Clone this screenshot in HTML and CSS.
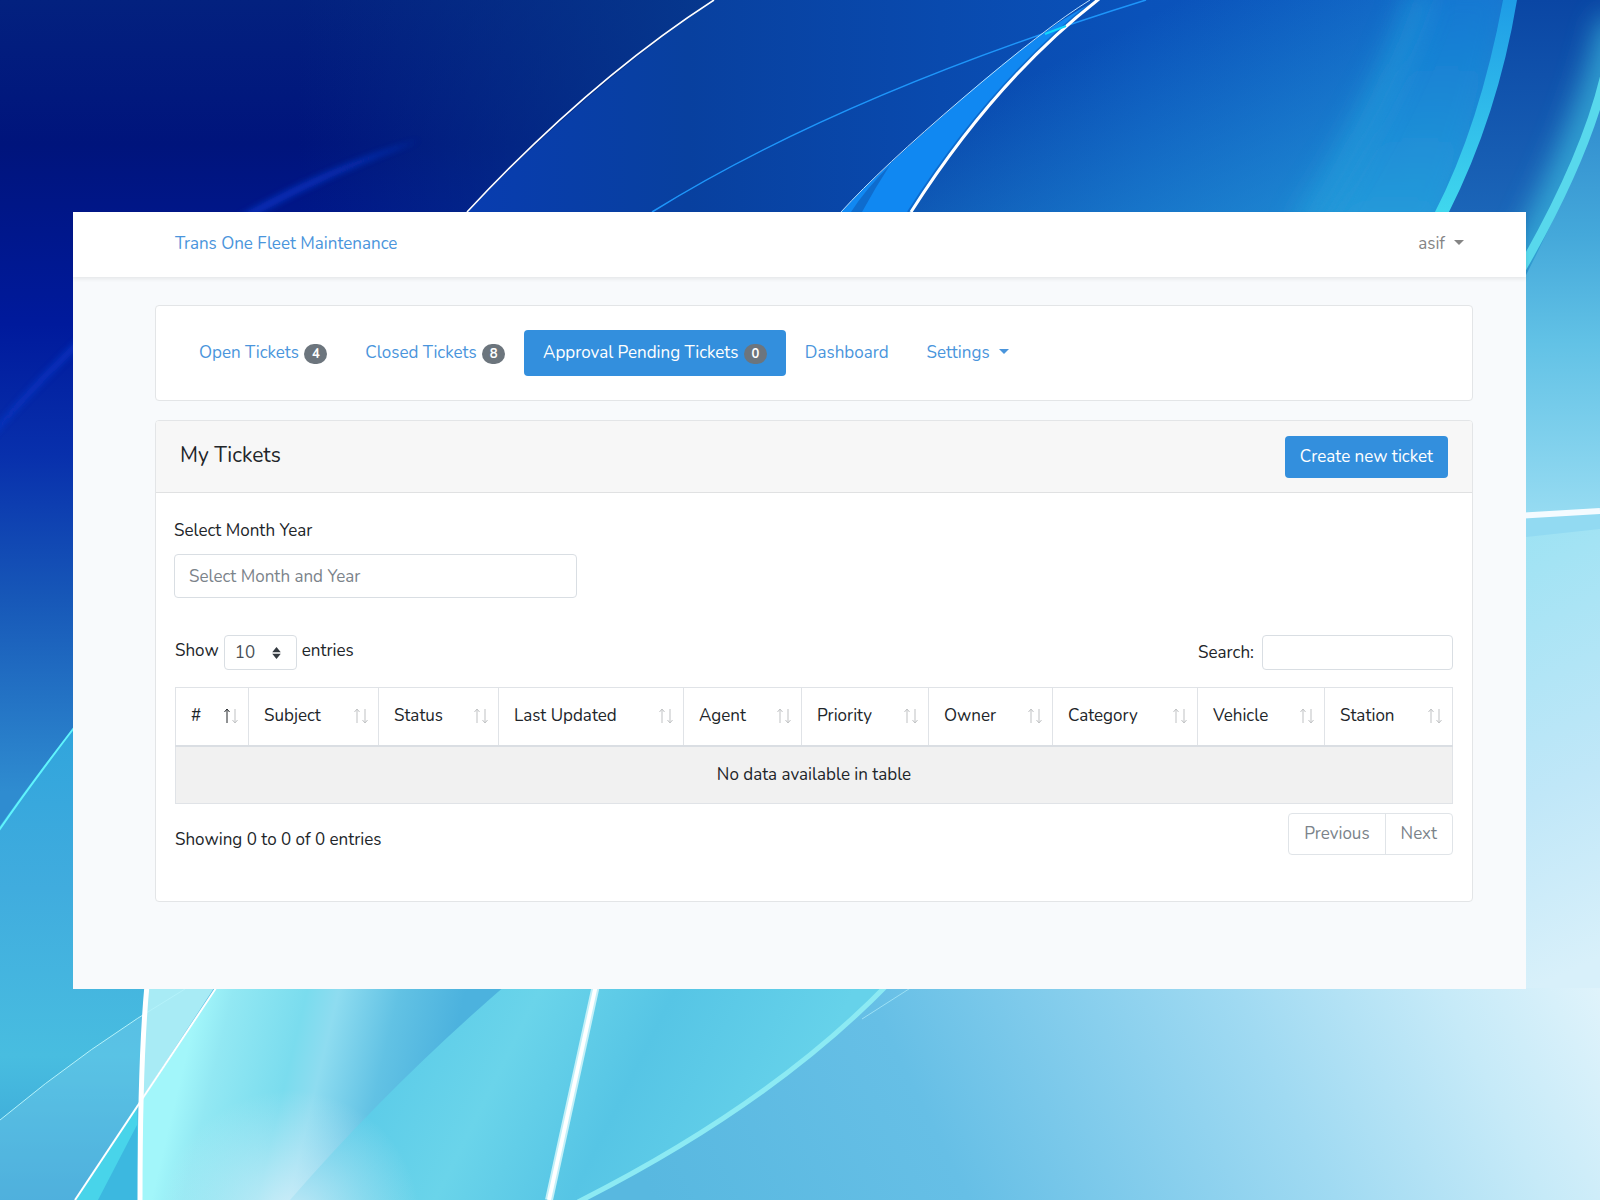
FILE: index.html
```
<!DOCTYPE html>
<html lang="en">
<head>
    <meta charset="UTF-8">
    <meta name="viewport" content="width=device-width, initial-scale=1.0">
    <title>Trans One Fleet Maintenance</title>
    <link rel="stylesheet" href="styles.css">
</head>
<body>
    <!-- wallpaper -->
    <svg class="wallpaper" viewBox="0 0 1600 1200" preserveAspectRatio="xMidYMid slice" aria-hidden="true">
        <defs>
            <linearGradient id="base" x1="0" y1="0" x2="0" y2="1">
                <stop offset="0" stop-color="#03217f"/>
                <stop offset=".12" stop-color="#00147c"/>
                <stop offset=".27" stop-color="#001a9c"/>
                <stop offset=".38" stop-color="#0830ac"/>
                <stop offset=".5" stop-color="#1758b8"/>
                <stop offset=".66" stop-color="#2f8cd0"/>
            </linearGradient>
            <linearGradient id="teal" x1="0" y1="0" x2="1" y2="0">
                <stop offset=".1" stop-color="#06358a" stop-opacity="0"/>
                <stop offset="1" stop-color="#06398f"/>
            </linearGradient>
            <linearGradient id="mid" x1="0" y1="0" x2="1" y2="0">
                <stop offset="0" stop-color="#083cb0"/>
                <stop offset=".2" stop-color="#08409f"/>
                <stop offset=".6" stop-color="#0a52ba"/>
                <stop offset="1" stop-color="#0c5cc4"/>
            </linearGradient>
            <linearGradient id="midGlow" gradientUnits="userSpaceOnUse" x1="1060" y1="60" x2="1180" y2="300">
                <stop offset="0" stop-color="#28a0dc" stop-opacity="0"/>
                <stop offset="1" stop-color="#28a0dc" stop-opacity=".7"/>
            </linearGradient>
            <linearGradient id="ray" x1="0" y1="0" x2="0" y2="1">
                <stop offset="0" stop-color="#1278d4"/>
                <stop offset="1" stop-color="#28a2dc"/>
            </linearGradient>
            <linearGradient id="band" x1="0" y1="0" x2="0" y2="1">
                <stop offset="0" stop-color="#0a46a4"/>
                <stop offset="1" stop-color="#2272c0"/>
            </linearGradient>
            <linearGradient id="stripe" x1="0" y1="0" x2="0" y2="1">
                <stop offset="0" stop-color="#1e9ce6"/>
                <stop offset="1" stop-color="#40d8ee"/>
            </linearGradient>
            <linearGradient id="right" x1="0" y1="0" x2="0" y2="1">
                <stop offset="0" stop-color="#2c86cc"/>
                <stop offset=".35" stop-color="#44a8da"/>
                <stop offset=".6" stop-color="#62c2e6"/>
                <stop offset="1" stop-color="#98dcf2"/>
            </linearGradient>
            <linearGradient id="rightLow" x1="0" y1="0" x2=".1" y2="1">
                <stop offset="0" stop-color="#9ce2f3"/>
                <stop offset=".6" stop-color="#c0e7f8"/>
                <stop offset="1" stop-color="#d8f0fa"/>
            </linearGradient>
            <linearGradient id="sky" x1="0" y1=".1" x2="1" y2="0">
                <stop offset="0" stop-color="#58b8e0"/>
                <stop offset=".3" stop-color="#66bfe6"/>
                <stop offset=".65" stop-color="#a0daf2"/>
                <stop offset=".85" stop-color="#c6eaf8"/>
                <stop offset="1" stop-color="#dff3fb"/>
            </linearGradient>
            <linearGradient id="leftLow" x1="0" y1="0" x2="0" y2="1">
                <stop offset="0" stop-color="#30a4dc"/>
                <stop offset=".35" stop-color="#40acde"/>
                <stop offset=".7" stop-color="#48bde0"/>
                <stop offset="1" stop-color="#38a0d4"/>
            </linearGradient>
            <linearGradient id="leaf" gradientUnits="userSpaceOnUse" x1="180" y1="1080" x2="430" y2="1140">
                <stop offset="0" stop-color="#a2f6fa"/>
                <stop offset=".12" stop-color="#92e8f3"/>
                <stop offset=".4" stop-color="#7adcee"/>
                <stop offset=".52" stop-color="#8edcf0"/>
                <stop offset=".75" stop-color="#62c2e4"/>
                <stop offset="1" stop-color="#4cb2de"/>
            </linearGradient>
            <linearGradient id="aqua" gradientUnits="userSpaceOnUse" x1="400" y1="1000" x2="760" y2="1180">
                <stop offset="0" stop-color="#5acbe8"/>
                <stop offset=".3" stop-color="#6ad4ea"/>
                <stop offset=".6" stop-color="#56c5e5"/>
                <stop offset="1" stop-color="#66d2ea"/>
            </linearGradient>
            <radialGradient id="mist" gradientUnits="userSpaceOnUse" cx="290" cy="1220" r="130">
                <stop offset="0" stop-color="#e0f2fb" stop-opacity=".8"/>
                <stop offset=".6" stop-color="#e0f2fb" stop-opacity=".3"/>
                <stop offset="1" stop-color="#e0f2fb" stop-opacity="0"/>
            </radialGradient>
            <filter id="soft" x="-50%" y="-50%" width="200%" height="200%">
                <feGaussianBlur stdDeviation="14"/>
            </filter>
            <filter id="glow" x="-50%" y="-50%" width="200%" height="200%">
                <feGaussianBlur stdDeviation="3"/>
            </filter>
        </defs>

        <rect width="1600" height="1200" fill="url(#base)"/>
        <rect x="250" width="480" height="300" fill="url(#teal)"/>
        <path d="M-10 434Q110 290 250 210Q330 165 420 140Q335 172 254 216Q120 290 -10 440Z" fill="#0a3ad0" opacity=".7" filter="url(#glow)"/>

        <!-- upper sheets -->
        <path d="M714 0Q590 85 467 212L460 400H1600V0Z" fill="url(#mid)"/>
        <path d="M1098 0Q985 90 900 230H1600V0Z" fill="url(#midGlow)"/>
        <path d="M1430 -20Q1395 90 1310 240H1440Q1490 120 1516 -20Z" fill="url(#ray)" opacity=".8" filter="url(#soft)"/>
        <path d="M1421 -10Q1390 90 1300 230" fill="none" stroke="#2cb4e4" stroke-width="18" opacity=".5" filter="url(#soft)"/>
        <path d="M1510 0Q1494 110 1442 220V300H1600V0Z" fill="url(#band)"/>
        <path d="M1620 20Q1600 120 1520 280" fill="none" stroke="#3cc0e0" stroke-width="40" opacity=".7" filter="url(#soft)"/>
        <path d="M1503 0Q1480 125 1434 214H1448Q1498 115 1517 0Z" fill="url(#stripe)"/>
        <path d="M1606 80Q1585 160 1526 275V520H1606Z" fill="url(#right)"/>
        <path d="M1605 75Q1585 160 1518 275" fill="none" stroke="#58d8ec" stroke-width="9"/>

        <path d="M714 0Q590 80 467 212" fill="none" stroke="#fff" stroke-width="1.600"/>
        <path d="M652 212Q840 95 1146 0" fill="none" stroke="#1e96fa" stroke-width="1.500"/>
        <path d="M1098 0Q1050 22 963 98T841 212H911Q985 90 1098 0Z" fill="#1088f2"/>
        <path d="M890 165Q865 190 851 212H862Q875 188 890 165Z" fill="#0e6cce"/>
        <path d="M1090 0Q1045 28 963 98T841 212" fill="none" stroke="#b8e0ff" stroke-width="1"/>
        <path d="M1096 -1Q992 80 908 212" fill="none" stroke="#0c56b4" stroke-width="2" opacity=".6"/>
        <path d="M1099 -1Q995 80 911 212" fill="none" stroke="#fff" stroke-width="3"/>
        <path d="M1045 34L1066 26" stroke="#10d8fc" stroke-width="2"/>

        <!-- right side -->
        <path d="M1500 518L1600 509V620H1500Z" fill="#92daf2"/>
        <path d="M1500 540L1600 529V1000H1500Z" fill="url(#rightLow)"/>
        <path d="M1500 517L1600 511" stroke="#f4fbff" stroke-width="6"/>
        <rect x="560" y="988" width="1040" height="212" fill="url(#sky)"/>

        <!-- lower left -->
        <path d="M-10 840Q30 782 80 720H300V1200H-10Z" fill="url(#leftLow)"/>
        <path d="M-5 836Q30 785 80 720" fill="none" stroke="#60f4fc" stroke-width="2"/>
        <path d="M0 1120Q90 1045 185 989L140 1200H0Z" fill="#7ccfee" opacity=".35"/>
        <path d="M137 1105L75 1200H140Z" fill="#48d4ea"/>
        <path d="M137 1125L98 1200H140Z" fill="#3cb8e0"/>
        <path d="M147 985L141 1100L216 985Z" fill="#a8ebf5"/>
        <path d="M218 985L141 1102V1200H300L520 985Z" fill="url(#leaf)"/>
        <path d="M506 985Q390 1085 290 1200H578Q770 1110 885 985Z" fill="url(#aqua)"/>
        <rect x="140" y="1080" width="330" height="120" fill="url(#mist)"/>
        <path d="M0 1120Q90 1045 185 989" fill="none" stroke="#b4f2fa" stroke-width="1"/>
        <path d="M218 985L75 1200" stroke="#fff" stroke-width="2"/>
        <path d="M147 985Q140 1060 140 1200" fill="none" stroke="#fff" stroke-width="5"/>
        <path d="M596 985L549 1200" stroke="#c4f0f8" stroke-width="8"/>
        <path d="M596 985L549 1200" stroke="#fff" stroke-width="4"/>
        <path d="M887 985Q770 1105 578 1202" fill="none" stroke="#8ceaf3" stroke-width="5"/>
        <path d="M912 987L862 1019" stroke="#9ce0f4" stroke-width="1"/>
    </svg>

    <!-- icons -->
    <svg class="sprite" aria-hidden="true">
        <symbol id="sort" viewBox="0 0 16 18">
            <path class="up" d="M4 16V3M1.500 5L4 2L6.500 5"/>
            <path class="down" d="M12 2V15M9.500 13L12 16L14.500 13"/>
        </symbol>
        <symbol id="updown" viewBox="0 0 10 14">
            <path d="M0 6L5 0L10 6ZM0 8L5 14L10 8Z"/>
        </symbol>
    </svg>

    <div class="app">
        <header class="navbar">
            <a class="brand" href="#">Trans One Fleet Maintenance</a>
            <button class="user-menu caret" type="button">asif</button>
        </header>

        <main class="content">
            <nav class="card tabs">
                <a class="tab" href="#">Open Tickets <span class="badge">4</span></a>
                <a class="tab" href="#">Closed Tickets <span class="badge">8</span></a>
                <a class="tab active" href="#">Approval Pending Tickets <span class="badge">0</span></a>
                <a class="tab" href="#">Dashboard</a>
                <a class="tab caret" href="#">Settings</a>
            </nav>

            <section class="card">
                <div class="card-header">
                    <h1>My Tickets</h1>
                    <button class="btn-primary" type="button">Create new ticket</button>
                </div>
                <div class="card-body">
                    <div class="month-filter">
                        <label for="month">Select Month Year</label>
                        <input class="field" id="month" type="text" placeholder="Select Month and Year">
                    </div>

                    <div class="table-tools">
                        <div class="length">
                            <label for="length">Show</label>
                            <span class="select-wrap">
                                <select class="field small" id="length">
                                    <option>10</option>
                                    <option>25</option>
                                    <option>50</option>
                                    <option>100</option>
                                </select>
                                <svg class="select-arrow"><use href="#updown"/></svg>
                            </span>
                            <span>entries</span>
                        </div>
                        <div class="search">
                            <label for="search">Search:</label>
                            <input class="field small" id="search" type="search">
                        </div>
                    </div>

                    <table class="tickets">
                        <thead>
                            <tr>
                                <th class="c-id sorted"><div>#<svg class="sort"><use href="#sort"/></svg></div></th>
                                <th class="c-subject"><div>Subject<svg class="sort"><use href="#sort"/></svg></div></th>
                                <th class="c-status"><div>Status<svg class="sort"><use href="#sort"/></svg></div></th>
                                <th class="c-updated"><div>Last Updated<svg class="sort"><use href="#sort"/></svg></div></th>
                                <th class="c-agent"><div>Agent<svg class="sort"><use href="#sort"/></svg></div></th>
                                <th class="c-priority"><div>Priority<svg class="sort"><use href="#sort"/></svg></div></th>
                                <th class="c-owner"><div>Owner<svg class="sort"><use href="#sort"/></svg></div></th>
                                <th class="c-category"><div>Category<svg class="sort"><use href="#sort"/></svg></div></th>
                                <th class="c-vehicle"><div>Vehicle<svg class="sort"><use href="#sort"/></svg></div></th>
                                <th class="c-station"><div>Station<svg class="sort"><use href="#sort"/></svg></div></th>
                            </tr>
                        </thead>
                        <tbody>
                            <tr>
                                <td colspan="10">No data available in table</td>
                            </tr>
                        </tbody>
                    </table>

                    <div class="table-footer">
                        <p>Showing 0 to 0 of 0 entries</p>
                        <div class="pagination">
                            <button type="button">Previous</button>
                            <button type="button">Next</button>
                        </div>
                    </div>
                </div>
            </section>
        </main>
    </div>
</body>
</html>
```
FILE: styles.css
```
* {
    box-sizing: border-box;
}

body {
    margin: 0;
    min-height: 100vh;
    padding: 212px 74px 211px 73px;
    font-family: Nunito, Lato, sans-serif;
    font-size: 17px;
    line-height: 26px;
    color: #212529;
}

h1, p {
    margin: 0;
}

button, input, select {
    font: inherit;
}

.wallpaper {
    position: fixed;
    top: 0;
    left: 0;
    width: 100%;
    height: 100%;
    z-index: -1;
}

.sprite {
    position: absolute;
    width: 0;
    height: 0;
}

.app {
    background: #f8fafc;
    padding-bottom: 87px;
}

/* top bar */
.navbar {
    display: flex;
    align-items: center;
    justify-content: space-between;
    height: 65px;
    padding: 0 62px 2px 102px;
    background: #fff;
    box-shadow: 0 2px 4px rgba(0, 0, 0, 0.08);
}

.brand {
    color: #4a95dc;
    text-decoration: none;
}

.user-menu {
    padding: 0;
    border: none;
    background: none;
    color: #858585;
}

.caret::after {
    content: "";
    display: inline-block;
    margin-left: 9px;
    vertical-align: 4px;
    border-top: 5px solid;
    border-left: 5px solid transparent;
    border-right: 5px solid transparent;
}

.content {
    padding: 28px 53px 0 82px;
}

.card {
    background: #fff;
    border: 1px solid #e3e5e7;
    border-radius: 4px;
    overflow: hidden;
}

/* tabs */
.tabs {
    display: flex;
    margin-bottom: 19px;
    padding: 24px;
}

.tab {
    padding: 10px 19px;
    border-radius: 4px;
    color: #4a95dc;
    text-decoration: none;
}

.tab.active {
    background: #338fdd;
    color: #fff;
}

.badge {
    display: inline-block;
    min-width: 23px;
    margin-left: 1px;
    padding: 0 7px;
    border-radius: 10px;
    background: #6c757d;
    color: #fff;
    font-size: 13px;
    font-weight: 700;
    line-height: 20px;
    text-align: center;
}

/* tickets card */
.card-header {
    display: flex;
    align-items: center;
    justify-content: space-between;
    height: 72px;
    padding: 0 24px;
    background: #f7f7f7;
    border-bottom: 1px solid #e0e1e2;
}

.card-header h1 {
    padding-bottom: 4px;
    font-size: 21px;
    font-weight: 400;
}

.btn-primary {
    height: 42px;
    padding: 0 15px;
    border: none;
    border-radius: 4px;
    background: #338fdd;
    color: #fff;
}

.card-body {
    padding: 25px 18px 46px;
}

.field {
    height: 44px;
    padding: 0 14px;
    border: 1px solid #d9dee3;
    border-radius: 4px;
    background: #fff;
    color: #495057;
}

.field::placeholder {
    color: #7b838a;
}

.field.small {
    height: 35px;
    padding: 0 10px;
}

.month-filter {
    display: flex;
    flex-direction: column;
    gap: 10px;
    width: 403px;
    margin-bottom: 37px;
}

.table-tools {
    display: flex;
    justify-content: space-between;
    margin: 0 1px 17px;
}

.length, .search {
    display: flex;
    align-items: center;
    gap: 5px;
}

.length > label,
.length > span:last-child {
    padding-bottom: 3px;
}

.search {
    gap: 8px;
}

.search .field {
    width: 191px;
}

.select-wrap {
    position: relative;
    display: flex;
}

.select-wrap select {
    width: 73px;
    appearance: none;
}

.select-arrow {
    position: absolute;
    top: 12px;
    right: 16px;
    width: 9px;
    height: 12px;
    fill: #343a40;
    pointer-events: none;
}

.tickets {
    width: calc(100% - 2px);
    margin: 0 1px;
    table-layout: fixed;
    border-collapse: collapse;
}

.tickets th,
.tickets td {
    height: 58px;
    padding: 0 15px;
    border: 1px solid #e0e3e7;
    font-weight: 400;
    text-align: left;
}

.tickets th {
    padding-right: 9px;
    border-bottom: 2px solid #dadee3;
}

.tickets th div {
    display: flex;
    align-items: center;
    justify-content: space-between;
}

.tickets td {
    background: #f1f1f1;
    text-align: center;
}

/* shared out in proportion when the table is wider or narrower */
.c-id { width: 73px; }
.c-subject { width: 130px; }
.c-status { width: 120px; }
.c-updated { width: 185px; }
.c-agent { width: 118px; }
.c-priority { width: 127px; }
.c-owner { width: 124px; }
.c-category { width: 145px; }
.c-vehicle { width: 127px; }
.c-station { width: 128px; }

.sort {
    width: 16px;
    height: 18px;
    fill: none;
    stroke-width: 1;
}

.up {
    stroke: var(--up, #bfc1c3);
}

.down {
    stroke: #bfc1c3;
}

.sorted {
    --up: #212529;
}

.table-footer {
    display: flex;
    align-items: flex-start;
    justify-content: space-between;
    margin: 0 1px;
    padding-top: 9px;
}

.table-footer p {
    padding-top: 14px;
}

.pagination {
    display: flex;
    border: 1px solid #e0e4e8;
    border-radius: 4px;
}

.pagination button {
    height: 40px;
    padding: 0 15px;
    border: none;
    background: none;
    color: #7b838a;
}

.pagination button + button {
    border-left: 1px solid #e0e4e8;
}
```
